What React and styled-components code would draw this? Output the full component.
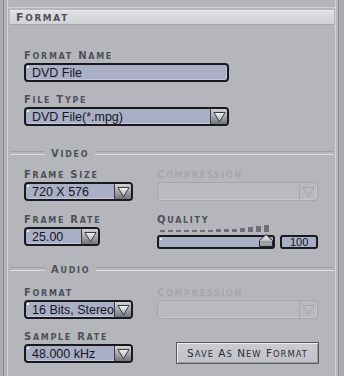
import React from 'react';
import styled, { createGlobalStyle } from 'styled-components';

const Global = createGlobalStyle`
  body {
    margin: 0;
    background: #b3b5bb;
  }
  * {
    box-sizing: border-box;
  }
`;

const Window = styled.div`
  width: 344px;
  height: 376px;
  display: flex;
  overflow: hidden;
  background: #b3b5bb;
`;

const LeftRail = styled.div`
  width: 9px;
  flex: none;
  background: linear-gradient(to right,
    #a9abb1 0 3px, #8b8d93 3px 4px, #b1b3b9 4px 7px, #d3d5d9 7px 8px, #b3b5bb 8px);
`;

const RightRail = styled.div`
  width: 9px;
  flex: none;
  background: linear-gradient(to right,
    #d2d4d8 0 1px, #b5b7bd 1px 3px, #8e9096 3px 4px, #a9abb1 4px);
`;

const Panel = styled.div`
  flex: 1;
  margin-top: 7px;
  border-top: 1px solid #d0d2d6;
  padding-top: 2px;
  background: #b4b6bc;
`;

const Header = styled.div`
  height: 15px;
  margin: 0 1px;
  padding-left: 6px;
  display: flex;
  align-items: center;
  background: linear-gradient(#dfe0e3, #d0d2d6);
  border-top: 1px solid #e9eaec;
  border-bottom: 1px solid #a3a5ab;
`;

const Caps = styled.span`
  font-family: "DejaVu Sans", sans-serif;
  font-weight: bold;
  font-size: ${p => p.$size || 10}px;
  letter-spacing: 1.7px;
  white-space: nowrap;
  color: ${p => (p.$disabled ? '#a5a7ad' : '#4e5058')};
`;

const Small = styled.span`
  font-size: 0.8em;
`;

const SmallCaps = ({ text }) =>
  text.split(' ').map((word, i) => (
    <React.Fragment key={i}>
      {i > 0 && ' '}
      {word[0]}
      <Small>{word.slice(1).toUpperCase()}</Small>
    </React.Fragment>
  ));

const Content = styled.div`
  padding-left: 15px;
`;

const Group = styled.div`
  margin-top: ${p => p.$top || 0}px;
`;

const Label = styled(Caps)`
  display: block;
  height: 12px;
  line-height: 16px;
  margin-bottom: 3px;
`;

const Divider = styled.div`
  display: flex;
  align-items: center;
  gap: 6px;
  height: 12px;
  margin: ${p => p.$top}px 1px 0 -14px;

  &::before,
  &::after {
    content: "";
    height: 2px;
    border-top: 1px solid #9ea0a6;
    border-bottom: 1px solid #dcdee2;
  }
  &::before {
    width: 35px;
  }
  &::after {
    flex: 1;
  }
`;

const Grid = styled.div`
  display: grid;
  grid-template-columns: 109px 161px;
  column-gap: 24px;
  row-gap: ${p => p.$gap}px;
  margin-top: ${p => p.$top}px;
`;

const Field = styled.div`
  position: relative;
  width: ${p => p.$w}px;
  height: 19px;
  display: flex;
  align-items: stretch;
  border: 2px solid #1a1a1e;
  border-radius: 4px;
  background: #a9b0c6;
  box-shadow: inset -1px -1px 0 #c3c8d8;
  overflow: hidden;

  &::before {
    content: "";
    position: absolute;
    left: 1px;
    top: 1px;
    width: 2px;
    height: 2px;
    background: #f4f5f8;
  }
`;

const FieldText = styled.span`
  flex: 1;
  padding-left: 6px;
  font-family: "Liberation Sans", Arial, sans-serif;
  font-size: 12.5px;
  line-height: 16px;
  color: #16161a;
  white-space: nowrap;
  overflow: hidden;
`;

const ArrowBox = styled.div`
  width: 17px;
  flex: none;
  display: flex;
  align-items: center;
  justify-content: center;
  border-left: 1px solid #3c3d43;
  background: linear-gradient(#d2d3d7, #9c9ea3 60%, #717378);
`;

const DisabledField = styled.div`
  width: 161px;
  height: 19px;
  display: flex;
  justify-content: flex-end;
  border: 1px solid #a4a6ac;
  border-radius: 4px;
  background: #b9bbc1;
  box-shadow: inset -1px -1px 0 #c6c8cd;
`;

const DisabledArrow = styled.div`
  width: 18px;
  display: flex;
  align-items: center;
  justify-content: center;
  border-left: 1px solid #a6a8ae;
`;

const Ticks = styled.div`
  display: flex;
  align-items: flex-end;
  gap: 3px;
  height: 7px;
  margin: -2px 0 0 3px;
`;

const Tick = styled.span`
  width: 5px;
  background: #6e7076;
`;

const SliderRow = styled.div`
  display: flex;
  gap: 5px;
  margin-top: 3px;
`;

const Track = styled.div`
  position: relative;
  width: 119px;
  height: 14px;
  display: flex;
  justify-content: flex-end;
  align-items: flex-end;
  border: 2px solid #1a1a1e;
  border-radius: 3px;
  background: #a9b0c6;

  &::before {
    content: "";
    position: absolute;
    left: 1px;
    top: 1px;
    width: 2px;
    height: 2px;
    background: #f4f5f8;
  }
`;

const ValueBox = styled.div`
  width: 38px;
  height: 14px;
  border: 2px solid #1a1a1e;
  border-radius: 3px;
  background: #a9b0c6;
  text-align: center;
  font-family: "Liberation Sans", Arial, sans-serif;
  font-size: 11px;
  line-height: 10px;
  color: #16161a;
`;

const Button = styled.button`
  justify-self: end;
  align-self: end;
  width: 143px;
  height: 22px;
  margin: 0 -1px -1px 0;
  padding: 0;
  border: 1px solid #55575d;
  background: linear-gradient(#cacbd0, #bfc1c6);
  box-shadow: inset 1px 1px 0 #eceef0, inset -1px -1px 0 #9a9ca2;
  cursor: pointer;
  font-family: "DejaVu Sans", sans-serif;
  font-size: 10.5px;
  letter-spacing: 1px;
  white-space: nowrap;
  color: #2c2d33;
`;

const Arrow = ({ faint }) => (
  <svg width="13" height="12" viewBox="0 0 13 12">
    <defs>
      <linearGradient id={faint ? 'af' : 'ag'} x1="0" y1="0" x2="0" y2="1">
        <stop offset="0" stopColor={faint ? '#bcbec4' : '#f2f2f4'} />
        <stop offset="1" stopColor={faint ? '#b4b6bc' : '#a6a8ad'} />
      </linearGradient>
    </defs>
    <polygon
      points="1,1.5 12,1.5 6.5,11"
      fill={`url(#${faint ? 'af' : 'ag'})`}
      stroke={faint ? '#a4a6ac' : '#3a3b41'}
      strokeWidth="1"
      strokeLinejoin="round"
    />
  </svg>
);

const Thumb = () => (
  <svg width="14" height="13" viewBox="0 0 14 13">
    <defs>
      <linearGradient id="tg" x1="0" y1="0" x2="0" y2="1">
        <stop offset="0" stopColor="#f4f4f6" />
        <stop offset="1" stopColor="#8e9095" />
      </linearGradient>
    </defs>
    <polygon points="0.5,12.5 0.5,6.5 7,0.5 13.5,6.5 13.5,12.5" fill="url(#tg)" stroke="#26272c" />
    <line x1="1" y1="8" x2="13" y2="8" stroke="#7c7e83" />
  </svg>
);

const Select = ({ width, value }) => (
  <Field $w={width}>
    <FieldText>{value}</FieldText>
    <ArrowBox>
      <Arrow />
    </ArrowBox>
  </Field>
);

const Disabled = () => (
  <DisabledField>
    <DisabledArrow>
      <Arrow faint />
    </DisabledArrow>
  </DisabledField>
);

const FieldLabel = ({ text, disabled }) => (
  <Label $disabled={disabled}>
    <SmallCaps text={text} />
  </Label>
);

const tickHeights = [2, 2, 2, 2, 2, 2, 2, 3, 3, 3, 4, 5, 6, 7];

const App = () => (
  <>
    <Global />
    <Window>
      <LeftRail />
      <Panel>
        <Header>
          <Caps $size={11}>
            <SmallCaps text="Format" />
          </Caps>
        </Header>
        <Content>
          <Group $top={23}>
            <FieldLabel text="Format Name" />
            <Field $w={205}>
              <FieldText>DVD File</FieldText>
            </Field>
          </Group>
          <Group $top={10}>
            <FieldLabel text="File Type" />
            <Select width={205} value="DVD File(*.mpg)" />
          </Group>

          <Divider $top={21}>
            <Caps>
              <SmallCaps text="Video" />
            </Caps>
          </Divider>
          <Grid $top={8} $gap={11}>
            <div>
              <FieldLabel text="Frame Size" />
              <Select width={109} value="720 X 576" />
            </div>
            <div>
              <FieldLabel text="Compression" disabled />
              <Disabled />
            </div>
            <div>
              <FieldLabel text="Frame Rate" />
              <Select width={76} value="25.00" />
            </div>
            <div>
              <FieldLabel text="Quality" />
              <Ticks>
                {tickHeights.map((h, i) => (
                  <Tick key={i} style={{ height: h }} />
                ))}
              </Ticks>
              <SliderRow>
                <Track>
                  <Thumb />
                </Track>
                <ValueBox>100</ValueBox>
              </SliderRow>
            </div>
          </Grid>

          <Divider $top={14}>
            <Caps>
              <SmallCaps text="Audio" />
            </Caps>
          </Divider>
          <Grid $top={10} $gap={10}>
            <div>
              <FieldLabel text="Format" />
              <Select width={109} value="16 Bits, Stereo" />
            </div>
            <div>
              <FieldLabel text="Compression" disabled />
              <Disabled />
            </div>
            <div>
              <FieldLabel text="Sample Rate" />
              <Select width={109} value="48.000 kHz" />
            </div>
            <Button>
              <SmallCaps text="Save As New Format" />
            </Button>
          </Grid>
        </Content>
      </Panel>
      <RightRail />
    </Window>
  </>
);

export default App;
